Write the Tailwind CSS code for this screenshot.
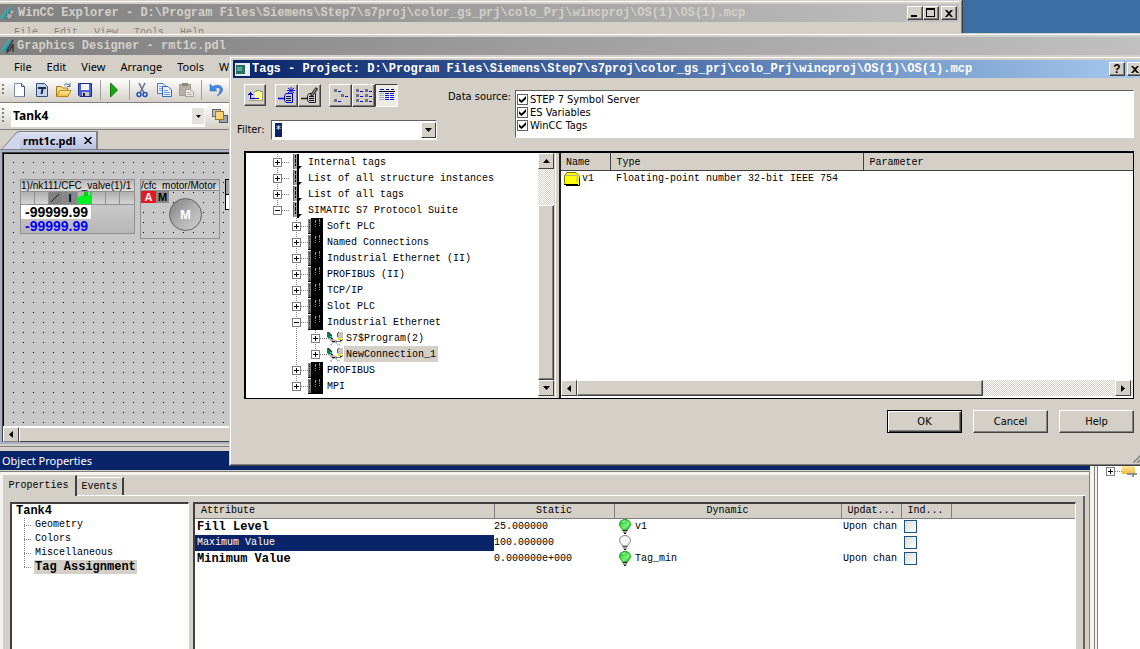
<!DOCTYPE html>
<html lang="en">
<head>
<meta charset="utf-8">
<title>Graphics Designer</title>
<script src="https://cdn.jsdelivr.net/npm/@tailwindcss/browser@4"></script>
</head>
<body class="relative h-screen overflow-hidden bg-[#3a6ea5] font-['Liberation_Mono',monospace] text-[10px] leading-4 text-black">

<svg class="absolute size-0" aria-hidden="true">
  <defs>
    <linearGradient id="gBulb" x1="0" y1="0" x2="1" y2="1"><stop offset="0" stop-color="#00c010"/><stop offset=".6" stop-color="#7cf07c"/><stop offset="1" stop-color="#00b010"/></linearGradient>
    <linearGradient id="gFold" x1="0" y1="0" x2="0" y2="1"><stop offset="0" stop-color="#fff0a8"/><stop offset="1" stop-color="#efb73a"/></linearGradient>
    <linearGradient id="gTeal" x1="0" y1="0" x2="1" y2="1"><stop offset="0" stop-color="#d8ffff"/><stop offset=".5" stop-color="#35b0b8"/><stop offset="1" stop-color="#0a5a68"/></linearGradient>
  </defs>
  <symbol id="plus" viewBox="0 0 16 16">
    <path d="M4.500 0V16" stroke="#808080" stroke-dasharray="1 1"/><path d="M9 8.500H16" stroke="#808080" stroke-dasharray="1 1"/>
    <rect x=".5" y="4.500" width="8" height="8" fill="#fff" stroke="#808080"/><path d="M2 8.500H7M4.500 6V11" stroke="#000"/>
  </symbol>
  <symbol id="plus-end" viewBox="0 0 16 16">
    <path d="M4.500 0V5" stroke="#808080" stroke-dasharray="1 1"/><path d="M9 8.500H16" stroke="#808080" stroke-dasharray="1 1"/>
    <rect x=".5" y="4.500" width="8" height="8" fill="#fff" stroke="#808080"/><path d="M2 8.500H7M4.500 6V11" stroke="#000"/>
  </symbol>
  <symbol id="minus" viewBox="0 0 16 16">
    <path d="M4.500 0V16" stroke="#808080" stroke-dasharray="1 1"/><path d="M9 8.500H16" stroke="#808080" stroke-dasharray="1 1"/>
    <rect x=".5" y="4.500" width="8" height="8" fill="#fff" stroke="#808080"/><path d="M2 8.500H7" stroke="#000"/>
  </symbol>
  <symbol id="minus-end" viewBox="0 0 16 16">
    <path d="M4.500 0V5" stroke="#808080" stroke-dasharray="1 1"/><path d="M9 8.500H16" stroke="#808080" stroke-dasharray="1 1"/>
    <rect x=".5" y="4.500" width="8" height="8" fill="#fff" stroke="#808080"/><path d="M2 8.500H7" stroke="#000"/>
  </symbol>
  <symbol id="guide" viewBox="0 0 19 16"><path d="M4.500 0V16" stroke="#808080" stroke-dasharray="1 1"/></symbol>
  <symbol id="taglist" viewBox="0 0 16 16">
    <rect x="4" y="0" width="4" height="15" fill="#a0a0a0"/><path d="M4.500 0V15" stroke="#606060"/><path d="M6.500 1V4M6.500 5V9M6.500 10V12" stroke="#000"/><rect x="8" y="0" width="2" height="16" fill="#000"/><path d="M8 12H13L10 15Z" fill="#000"/>
  </symbol>
  <symbol id="channel" viewBox="0 0 16 16">
    <rect x="0" y="1" width="3" height="14" fill="#808080"/><path d="M1.500 2V5M1.500 6V7M1.500 8V11M1.500 12V15" stroke="#f00"/><rect x="3" y="0" width="12" height="16" fill="#000"/><path d="M7.500 2V9M11.500 1V8" stroke="#909090" stroke-dasharray="3 1 1 1"/><path d="M0 15.500H4" stroke="#000"/>
  </symbol>
  <symbol id="conn" viewBox="0 0 17 16">
    <path d="M0 2H2L5 5V9H2L0 7Z" fill="#0a8a30"/><path d="M1 2L5 6" stroke="#124"/><path d="M2 8L5 8L8 10H10V13H6L3 11Z" fill="#b0b0b0"/><path d="M16 2H12L10 4V7L12 9L16 8Z" fill="#c4c4c4"/><path d="M10.500 4V7M12 2L10 4" stroke="#555"/><path d="M11 8H14V10H11Z" fill="#e8e000"/><path d="M9 11.500H14L16 9" fill="none" stroke="#777"/><path d="M4 8.500H6M5 11.500H8M13 10.500H15" stroke="#222"/><path d="M3 15L6 13M9 13L12 15M4 15H6M10 15H13" stroke="#999" stroke-dasharray="1 1"/><path d="M3 6.500H5" stroke="#0cc"/>
  </symbol>
  <symbol id="bulb-on" viewBox="0 0 12 15">
    <path d="M6 .5C9 .5 11.500 2.500 11.500 5.500C11.500 8 9 9 8.500 11H3.500C3 9 .5 8 .5 5.500C.5 2.500 3 .5 6 .5Z" fill="url(#gBulb)" stroke="#12a018"/><path d="M3 3Q4 2 6 2" stroke="#d8ffd8" fill="none"/><path d="M3.500 11.500H8.500M4 13H8" stroke="#333"/><path d="M5 14.500H7" stroke="#111"/>
  </symbol>
  <symbol id="bulb-off" viewBox="0 0 12 15">
    <path d="M6 .5C9 .5 11.500 2.500 11.500 5.500C11.500 8 9 9 8.500 11H3.500C3 9 .5 8 .5 5.500C.5 2.500 3 .5 6 .5Z" fill="#f4f4f4" stroke="#888"/><path d="M3.500 11.500H8.500M4 13H8" stroke="#555"/><path d="M5 14.500H7" stroke="#111"/>
  </symbol>
  <symbol id="x" viewBox="0 0 8 7"><path d="M0 0H2L4 2L6 0H8L5 3.500L8 7H6L4 5L2 7H0L3 3.500Z" fill="#000"/></symbol>
</svg>

<!-- WinCC Explorer -->
<section aria-label="WinCC Explorer" class="absolute top-0 left-0 h-[34px] w-[963px] overflow-hidden border-r border-[#404040] bg-[#d4d0c8]">
  <div class="h-full border-r border-[#808080] pr-[2px]">
    <div class="mt-px border-t border-white"></div>
    <header class="mt-[2px] flex h-[18px] items-center bg-linear-to-r from-[#808080] to-[#c0c0c0] pr-[2px]">
      <svg class="size-4 shrink-0" viewBox="0 0 16 16"><path d="M11 0L1 12L0 14L9 13Z" fill="url(#gTeal)"/><circle cx="9.500" cy="11" r="3" fill="#aaa" stroke="#555" stroke-dasharray="2 1"/><circle cx="12" cy="7" r="2" fill="#bbb" stroke="#555" stroke-dasharray="1 1"/></svg>
      <h1 class="ml-[2px] flex-1 text-[12px] font-bold whitespace-nowrap text-[#d4d0c8]">WinCC Explorer - D:\Program Files\Siemens\Step7\s7proj\color_gs_prj\colo_Prj\wincproj\OS(1)\OS(1).mcp</h1>
      <button aria-label="Minimize" class="h-[14px] w-4 border border-white border-r-[#404040] border-b-[#404040] bg-[#d4d0c8] shadow-[inset_-1px_-1px_0_#808080]"><svg class="ml-[3px] h-3 w-2" viewBox="0 0 8 12"><rect y="8" width="6" height="2"/></svg></button>
      <button aria-label="Maximize" class="h-[14px] w-4 border border-white border-r-[#404040] border-b-[#404040] bg-[#d4d0c8] shadow-[inset_-1px_-1px_0_#808080]"><svg class="ml-[2px] h-3 w-[9px]" viewBox="0 0 9 12" shape-rendering="crispEdges"><path d="M.5 2V9.500H8.500V2" fill="none" stroke="#000"/><rect y="1" width="9" height="2"/></svg></button>
      <button aria-label="Close" class="ml-[2px] flex h-[14px] w-4 items-center justify-center border border-white border-r-[#404040] border-b-[#404040] bg-[#d4d0c8] shadow-[inset_-1px_-1px_0_#808080]"><svg class="h-[7px] w-2"><use href="#x"/></svg></button>
    </header>
    <nav class="flex gap-4 pt-[3px] pl-[14px] text-[#808080]"><a href="#">File</a><a href="#">Edit</a><a href="#">View</a><a href="#">Tools</a><a href="#">Help</a></nav>
  </div>
</section>

<!-- Graphics Designer -->
<main class="absolute inset-x-0 top-[33px] bottom-0 flex flex-col bg-[#d4d0c8]">
  <div class="mt-px border-t border-white"></div>
  <header class="mt-[2px] flex h-[18px] shrink-0 items-center bg-linear-to-r from-[#808080] to-[#c0c0c0]">
    <svg class="size-4 shrink-0" viewBox="0 0 16 16"><path d="M9 1L0 14L7 12L10 3Z" fill="url(#gTeal)"/><path d="M13 2L8 11L7 14L10 12L13 6V14" fill="none" stroke="#333" stroke-width="1.500"/></svg>
    <h2 class="ml-px text-[12px] font-bold text-[#d4d0c8]">Graphics Designer - rmt1c.pdl</h2>
  </header>
  <nav class="flex h-[23px] w-[230px] shrink-0 items-center gap-[15px] overflow-hidden pl-[14px] font-['Noto_Sans',sans-serif] text-[11px]">
    <a href="#">File</a><a href="#">Edit</a><a href="#">View</a><a href="#">Arrange</a><a href="#">Tools</a><a href="#">Window</a>
  </nav>
  <div class="flex h-[25px] shrink-0 items-center border-b border-[#808080] bg-linear-to-b from-white to-[#d4d0c8] pl-[2px]">
    <svg class="mr-2 h-3 w-[2px]" viewBox="0 0 2 12"><path d="M1 0V12" stroke="#808080" stroke-width="2" stroke-dasharray="2 2"/></svg>
    <button aria-label="New"><svg class="size-4" viewBox="0 0 16 16"><path d="M2.500 1.500H9.500L12.500 4.500V14.500H2.500Z" fill="#fbfdff" stroke="#7890b0"/><path d="M9.500 1.500V4.500H12.500V14.500" fill="none" stroke="#405878"/></svg></button>
    <button aria-label="New template" class="ml-[6px]"><svg class="size-4" viewBox="0 0 16 16"><path d="M2.500 1.500H10.500L13.500 4.500V14.500H2.500Z" fill="#c2d2ec" stroke="#33507c"/><path d="M4 5H12V7H9.500L8.500 12H6.500L7.500 7H4Z" fill="#1a2840"/></svg></button>
    <button aria-label="Open" class="ml-[5px]"><svg class="h-4 w-[18px]" viewBox="0 0 18 16"><path d="M1.500 14V4.500H6L7.500 6H12.500V8" fill="#f9dc82" stroke="#a87818"/><path d="M1.500 14.500L4.500 8.500H16L13 14.500Z" fill="url(#gFold)" stroke="#b8841c"/><path d="M9 3.500Q12 0 15 4M15 1V4.500H12" fill="none" stroke="#506888"/></svg></button>
    <button aria-label="Save" class="ml-1"><svg class="size-4" viewBox="0 0 16 16"><path d="M1.500 1.500H14.500V14.500H3L1.500 13Z" fill="#4a62d8" stroke="#1c2c90"/><rect x="4" y="2" width="8" height="6" fill="#f4f6ff"/><rect x="5" y="10" width="7" height="4" fill="#c8c8d0"/><rect x="6" y="11" width="2" height="3" fill="#222"/></svg></button>
    <span class="mr-[6px] ml-[7px] h-5 border-l border-[#a0a0a0]"></span>
    <button aria-label="Run"><svg class="size-4" viewBox="0 0 16 16"><path d="M3.500 1V15L10.500 8Z" fill="#18a818" stroke="#0a7a0a"/></svg></button>
    <span class="mr-1 ml-[6px] h-5 border-l border-[#a0a0a0]"></span>
    <button aria-label="Cut"><svg class="size-4" viewBox="0 0 16 16"><path d="M5 1L10 11M11 1L6 11" stroke="#607088" stroke-width="1.500"/><circle cx="5" cy="12.500" r="2" fill="none" stroke="#2050b8" stroke-width="1.500"/><circle cx="11" cy="12.500" r="2" fill="none" stroke="#2050b8" stroke-width="1.500"/></svg></button>
    <button aria-label="Copy" class="ml-[6px]"><svg class="size-4" viewBox="0 0 16 16"><path d="M1.500 1.500H7L9.500 4V11.500H1.500Z" fill="#eaf3ff" stroke="#4878c0"/><path d="M3 4.500H7M3 6.500H7M3 8.500H6" stroke="#78a4e0"/><path d="M6.500 4.500H12L15.500 8V14.500H6.500Z" fill="#eaf3ff" stroke="#3868b8"/><path d="M8 8.500H12M8 10.500H14M8 12.500H14" stroke="#6898dc"/></svg></button>
    <button aria-label="Paste" class="ml-[6px]"><svg class="size-4" viewBox="0 0 16 16"><path d="M1.500 2.500H12.500V13.500H1.500Z" fill="#b8b0a4" stroke="#a09a90"/><rect x="4" y="1" width="6" height="3" fill="#8c867c"/><path d="M7.500 7.500H12L15.500 10V14.500H7.500Z" fill="#ece8e4" stroke="#a8a29a"/><path d="M9 10.500H13M9 12.500H14" stroke="#b8b2aa"/></svg></button>
    <span class="mx-[7px] h-5 border-l border-[#a0a0a0]"></span>
    <button aria-label="Undo"><svg class="size-4" viewBox="0 0 16 16"><path d="M1 2V9H8L6 7Q11 4 11 8Q11 11 8 14Q14 11 13.500 7Q12 1 3.500 4.500Z" fill="#4088e8" stroke="#2a60b8" stroke-width=".5"/></svg></button>
  </div>
  <div class="flex h-[27px] shrink-0 items-center border-b border-[#808080] bg-linear-to-b from-white to-[#d4d0c8] pl-[2px]">
    <svg class="mr-[7px] h-4 w-[2px]" viewBox="0 0 2 16"><path d="M1 0V16" stroke="#808080" stroke-width="2" stroke-dasharray="2 2"/></svg>
    <div class="flex h-[21px] w-[194px] items-center bg-white pr-px">
      <select aria-label="Object" class="min-w-0 flex-1 appearance-none bg-white pl-[2px] font-['Noto_Sans',sans-serif] text-[12px] font-bold"><option>Tank4</option></select>
      <span class="flex h-4 w-3 items-center justify-center bg-[#e4e1dc]"><svg class="h-[3px] w-[5px]" viewBox="0 0 5 3"><path d="M0 0H5L2.500 3Z"/></svg></span>
    </div>
    <button aria-label="Arrange" class="ml-[7px]"><svg class="size-4" viewBox="0 0 16 16"><rect x=".5" y="1.500" width="8" height="7" fill="#b8c0c8" stroke="#606870"/><rect x="7.500" y="7.500" width="8" height="7" fill="#98a4b0" stroke="#505860"/><rect x="3.500" y="3.500" width="8" height="8" fill="#fcd478" stroke="#a87818"/></svg></button>
  </div>

  <!-- Drawing tabs and canvas -->
  <div class="flex h-5 shrink-0 items-end border-b border-[#808080]">
    <div class="ml-[2px] flex h-5">
      <svg class="h-5 w-[18px]" viewBox="0 0 18 20"><path d="M0 20L14 4Q16 2 18 2V20Z" fill="#cfd6ee"/><path d="M0 20L14 4Q16 2.500 18 2.500" fill="none" stroke="#808080"/></svg>
      <button class="mt-[2px] flex items-center gap-2 border-t border-r-2 border-[#808080] bg-linear-to-b from-[#dde2f4] to-[#b8c2e0] pr-1 pl-[3px] font-['Noto_Sans',sans-serif] text-[11px] font-bold">rmt1c.pdl <svg class="h-[7px] w-2" viewBox="0 0 8 7"><path d="M.5 0L7.500 7M7.500 0L.5 7" stroke="#000" stroke-width="1.500"/></svg></button>
    </div>
  </div>
  <div class="shrink-0 border-y-2 border-l-2 border-[#a8b0c8]">
    <div class="border-t border-l border-[#404040]">
      <div class="relative h-[273px] overflow-hidden border-t border-l border-black bg-[#c8c8c8] bg-[radial-gradient(circle_at_0.5px_0.5px,#000_0.6px,transparent_0.7px)] bg-[length:10px_10px] bg-[position:9px_8px] font-['Liberation_Sans',sans-serif]">
        <div class="absolute top-[25px] left-4 w-[115px] border border-[#909090] bg-linear-to-b from-[#d8d8d8] to-[#b8b8b8]">
          <div class="h-[11px] overflow-hidden bg-linear-to-b from-[#b8b8b8] to-[#dcdcdc] text-[10px] leading-[11px] whitespace-nowrap">1)/nk111/CFC_valve(1)/1</div>
          <div class="grid h-[14px] grid-cols-8 divide-x divide-[#909090] border-y border-[#909090] bg-linear-to-b from-[#b0b0b0] to-[#d4d4d4]">
            <span></span><span></span>
            <span class="bg-[#808080]"><svg class="size-3" viewBox="0 0 12 12"><path d="M2 10L10 2" stroke="#222"/></svg></span>
            <span class="bg-[#888] text-center text-[11px] leading-3 font-bold">I</span>
            <span class="bg-[#00f020]"><svg class="size-3" viewBox="0 0 12 12"><path d="M0 0H6V2L4 4L0 5ZM10 0H12V3H10Z" fill="#b8b8b8"/><circle cx="8" cy="2" r="2" fill="#00c818"/></svg></span>
            <span></span><span></span><span></span>
          </div>
          <div class="w-[70px] bg-white pl-1 text-[14px] leading-[14px] font-bold">-99999.99</div>
          <div class="pl-1 text-[14px] leading-[14px] font-bold text-[#0000ff]">-99999.99</div>
        </div>
        <div class="absolute top-[25px] left-[136px] h-[60px] w-20 border border-[#909090]">
          <div class="h-[11px] overflow-hidden border-b border-[#909090] bg-linear-to-b from-[#b8b8b8] to-[#dcdcdc] text-[10px] leading-[11px] whitespace-nowrap">/cfc_motor/Motor</div>
          <div class="flex h-3 text-center text-[11px] leading-3 font-bold"><span class="w-[15px] bg-[#e81820] text-white">A</span><span class="w-[13px] bg-[#888]">M</span></div>
          <div class="absolute top-[18px] left-7 flex size-[33px] items-center justify-center rounded-full border border-[#606060] bg-linear-to-br from-[#808080] via-[#b0b0b0] to-[#d0d0d0] text-[13px] font-bold text-white">M</div>
        </div>
        <div class="absolute top-[25px] left-[221px] h-[31px] w-20 border border-black bg-white"><div class="h-[15px] border-b border-black bg-[#a0a0a0]"></div></div>
      </div>
      <div class="flex h-4 border-t border-white bg-[#d4d0c8]">
        <button aria-label="Scroll left" class="flex w-4 items-center justify-center border border-white border-r-[#404040] border-b-[#808080]"><svg class="h-[7px] w-1" viewBox="0 0 4 7"><path d="M4 0V7L0 3.500Z"/></svg></button>
        <div class="flex-1 border border-white border-b-[#404040]"></div>
      </div>
    </div>
  </div>

  <!-- Object properties and library -->
  <div class="mt-[2px] flex min-h-0 flex-1 border-t border-[#808080]">
    <section aria-label="Object Properties" class="flex min-w-0 flex-1 flex-col">
      <h2 class="mt-1 h-[19px] shrink-0 bg-[#0a246a] pl-[2px] font-['Noto_Sans',sans-serif] text-[11px] leading-[19px] text-white">Object Properties</h2>
      <div class="mt-px flex min-h-0 flex-1 flex-col border-t border-r border-[#808080] bg-[#f4f3f0] pt-[3px] pl-[3px]">
        <div class="flex min-h-0 flex-1 flex-col bg-[#d4d0c8] pr-1">
          <div class="flex shrink-0 items-end" role="tablist">
            <button role="tab" class="h-[21px] w-[74px] border-t border-r-2 border-[#d4d0c8] border-r-[#404040] pr-px text-[10px]">Properties</button>
            <div class="flex flex-1 items-end border-b border-white">
              <button role="tab" class="h-[18px] w-[47px] border-t border-r-2 border-t-white border-r-[#404040] text-[10px]">Events</button>
            </div>
          </div>
          <div class="flex min-h-0 flex-1 gap-1 border-r-2 border-[#606060] pt-[6px] pr-[7px] pl-[7px]">
            <div class="w-[179px] shrink-0 border-t-2 border-r border-l-2 border-[#404040] border-r-white bg-white">
              <div class="pl-1 text-[12px] leading-[14px] font-bold">Tank4</div>
              <ul class="leading-[14px]">
                <li class="flex"><svg class="mr-[3px] ml-3 h-[14px] w-2" viewBox="0 0 8 14" shape-rendering="crispEdges"><path d="M.5 0V14M0 7.500H8" stroke="#808080" stroke-dasharray="1 1"/></svg><a href="#">Geometry</a></li>
                <li class="flex"><svg class="mr-[3px] ml-3 h-[14px] w-2" viewBox="0 0 8 14" shape-rendering="crispEdges"><path d="M.5 0V14M0 7.500H8" stroke="#808080" stroke-dasharray="1 1"/></svg><a href="#">Colors</a></li>
                <li class="flex"><svg class="mr-[3px] ml-3 h-[14px] w-2" viewBox="0 0 8 14" shape-rendering="crispEdges"><path d="M.5 0V14M0 7.500H8" stroke="#808080" stroke-dasharray="1 1"/></svg><a href="#">Miscellaneous</a></li>
                <li class="flex"><svg class="mr-[2px] ml-3 h-[14px] w-2" viewBox="0 0 8 14" shape-rendering="crispEdges"><path d="M.5 0V8M0 7.500H8" stroke="#808080" stroke-dasharray="1 1"/></svg><a href="#" class="bg-[#d4d0c8] px-px text-[12px] font-bold">Tag Assignment</a></li>
              </ul>
            </div>
            <div class="min-w-0 flex-1 border-t-2 border-r border-l-2 border-[#404040] border-r-white bg-white">
              <table class="w-full table-fixed border-collapse text-left">
                <colgroup><col class="w-[299px]"><col class="w-[120px]"><col class="w-[227px]"><col class="w-[60px]"><col class="w-[50px]"><col></colgroup>
                <thead class="bg-[#d4d0c8]">
                  <tr class="h-[14px] border-b border-[#808080] leading-3">
                    <th class="border-r border-[#808080] p-0 pt-px pl-[6px] font-normal">Attribute</th>
                    <th class="border-r border-[#808080] p-0 pt-px text-center font-normal">Static</th>
                    <th class="border-r border-[#808080] p-0 pt-px text-center font-normal">Dynamic</th>
                    <th class="border-r border-[#808080] p-0 pt-px pl-[6px] font-normal">Updat...</th>
                    <th class="border-r border-[#808080] p-0 pt-px pl-[6px] font-normal">Ind...</th>
                    <th class="p-0"></th>
                  </tr>
                </thead>
                <tbody>
                  <tr class="h-4">
                    <td class="p-0 pl-[2px] text-[12px] font-bold">Fill Level</td><td class="p-0">25.000000</td>
                    <td class="p-0"><span class="flex items-center gap-1 pl-[5px]"><svg class="h-[15px] w-3"><use href="#bulb-on"/></svg>v1</span></td>
                    <td class="p-0 pl-[2px] whitespace-nowrap">Upon chan</td>
                    <td class="p-0"><input type="checkbox" aria-label="Fill Level indirect" class="ml-[3px] block size-[13px] appearance-none border border-[#1c5180] bg-linear-to-br from-[#dcdcd7] to-white"></td><td></td>
                  </tr>
                  <tr class="h-4">
                    <td class="bg-[#0a246a] p-0 pl-[2px] text-white">Maximum Value</td><td class="p-0">100.000000</td>
                    <td class="p-0"><span class="flex items-center gap-1 pl-[5px]"><svg class="h-[15px] w-3"><use href="#bulb-off"/></svg></span></td>
                    <td></td>
                    <td class="p-0"><input type="checkbox" aria-label="Maximum Value indirect" class="ml-[3px] block size-[13px] appearance-none border border-[#1c5180] bg-linear-to-br from-[#dcdcd7] to-white"></td><td></td>
                  </tr>
                  <tr class="h-4">
                    <td class="p-0 pl-[2px] text-[12px] font-bold">Minimum Value</td><td class="p-0">0.000000e+000</td>
                    <td class="p-0"><span class="flex items-center gap-1 pl-[5px]"><svg class="h-[15px] w-3"><use href="#bulb-on"/></svg>Tag_min</span></td>
                    <td class="p-0 pl-[2px] whitespace-nowrap">Upon chan</td>
                    <td class="p-0"><input type="checkbox" aria-label="Minimum Value indirect" class="ml-[3px] block size-[13px] appearance-none border border-[#1c5180] bg-linear-to-br from-[#dcdcd7] to-white"></td><td></td>
                  </tr>
                </tbody>
              </table>
            </div>
          </div>
        </div>
      </div>
    </section>
    <aside aria-label="Library" class="flex w-[50px] shrink-0 bg-[#f4f3f0] pl-1">
      <div class="w-1 border-x border-[#808080]"></div>
      <div class="flex-1 bg-white pt-4 pl-2">
        <div class="flex"><svg class="size-4 shrink-0" shape-rendering="crispEdges"><use href="#plus-end"/></svg><svg class="size-4 shrink-0" viewBox="0 0 16 16"><path d="M0 2H11L13 4V11H0Z" fill="url(#gFold)"/><path d="M5 11H15M11 11V14" stroke="#909090" stroke-width="2"/></svg></div>
      </div>
    </aside>
  </div>
</main>

<!-- Tags dialog -->
<section role="dialog" aria-label="Tags" class="absolute top-[56px] -right-[9px] left-[229px] border border-[#d4d0c8] border-b-[#404040] bg-[#d4d0c8]">
  <div class="border border-white border-b-[#808080]">
    <header class="mx-[2px] mt-[2px] flex h-[18px] items-center bg-linear-to-r from-[#0a246a] to-[#a6caf0] pr-[2px] pl-[2px]">
      <svg class="h-[13px] w-[15px]" viewBox="0 0 15 13"><rect width="15" height="13" fill="#e8e8e8"/><rect x="1" y="2" width="9" height="9" fill="#2a7060"/><rect x="2" y="4" width="5" height="4" fill="#58a8a0"/><rect x="11" y="2" width="3" height="2" fill="#fff"/><rect x="11" y="5" width="3" height="2" fill="#fff"/></svg>
      <h2 class="ml-[2px] flex-1 text-[12px] font-bold whitespace-nowrap text-white">Tags - Project: D:\Program Files\Siemens\Step7\s7proj\color_gs_prj\colo_Prj\wincproj\OS(1)\OS(1).mcp</h2>
      <button aria-label="Help" class="h-[14px] w-4 border border-white border-r-[#404040] border-b-[#404040] bg-[#d4d0c8] font-['Liberation_Sans',sans-serif] text-[12px] leading-3 font-bold shadow-[inset_-1px_-1px_0_#808080]">?</button>
      <button aria-label="Close" class="ml-[2px] flex h-[14px] w-4 items-center justify-center border border-white border-r-[#404040] border-b-[#404040] bg-[#d4d0c8] shadow-[inset_-1px_-1px_0_#808080]"><svg class="h-[7px] w-2"><use href="#x"/></svg></button>
    </header>
    <div class="pr-[13px] pb-[31px] pl-[13px] font-['DejaVu_Sans_Condensed','DejaVu_Sans',sans-serif] text-[11px]">
      <div class="flex pt-[6px]">
        <div class="w-[193px] shrink-0">
          <div class="flex">
            <button aria-label="Up one level" class="flex size-[22px] items-center justify-center border border-white border-r-[#404040] border-b-[#404040] shadow-[inset_-1px_-1px_0_#808080]"><svg class="size-4" viewBox="0 0 16 16" shape-rendering="crispEdges"><path d="M7.500 13.500V3.500H9L10 2.500H13L14 4.500H15.500V13.500Z" fill="#ffff98"/><path d="M7 4.500H9L10 3.500H13L14 4.500H15.500V13.500H2" fill="none" stroke="#a0a080"/><path d="M3.500 11V5M1 7.500H6M2 6.500H5M3 11.500H12" stroke="#0000d0"/></svg></button>
            <button aria-label="New tag" class="ml-[9px] flex size-[23px] items-center justify-center border border-white border-r-[#404040] border-b-[#404040] shadow-[inset_-1px_-1px_0_#808080]"><svg class="size-[19px]" viewBox="0 0 19 19"><path d="M7.500 9.500L9 7.500H15.500V16.500H9L7.500 14.500Z" fill="#c8c8d8" stroke="#0000c8"/><path d="M1 12.500H7" stroke="#0000f0" stroke-width="1.500"/><path d="M9 10.500H14M9 12.500H14M9 14.500H14" stroke="#101030"/><path d="M14 1V8M10 4.500H18M11 2L17 7M17 2L11 7" stroke="#1010f0"/></svg></button>
            <button aria-label="Edit tag" class="flex size-[23px] items-center justify-center border border-white border-r-[#404040] border-b-[#404040] shadow-[inset_-1px_-1px_0_#808080]"><svg class="size-[19px]" viewBox="0 0 19 19"><path d="M7.500 9.500L9 7.500H15.500V16.500H9L7.500 14.500Z" fill="#c8c8c8" stroke="#222"/><path d="M1 12.500H7" stroke="#222" stroke-width="1.500"/><path d="M9 10.500H14M9 12.500H14M9 14.500H14" stroke="#000"/><path d="M17 2L11 10" stroke="#333" stroke-width="3"/><path d="M16 3L12 9" stroke="#aaa"/></svg></button>
            <button aria-label="Small icons" class="ml-2 flex size-[23px] items-center justify-center border border-white border-r-[#404040] border-b-[#404040] shadow-[inset_-1px_-1px_0_#808080]"><svg class="h-4 w-[18px]" viewBox="0 0 18 16" shape-rendering="crispEdges"><path d="M2 1H5V4H2ZM9 6H12V9H9ZM2 11H5V14H2Z" fill="#707080"/><path d="M6 3.500H9M13 8.500H16M6 13.500H9" stroke="#0000f0"/></svg></button>
            <button aria-label="List" class="flex size-[23px] items-center justify-center border border-white border-r-[#404040] border-b-[#404040] shadow-[inset_-1px_-1px_0_#808080]"><svg class="h-4 w-[18px]" viewBox="0 0 18 16" shape-rendering="crispEdges"><path d="M1 1H4V4H1ZM1 6H4V9H1ZM1 11H4V14H1ZM10 1H13V4H10ZM10 6H13V9H10ZM10 11H13V14H10Z" fill="#707080"/><path d="M5 3.500H8M5 8.500H8M5 13.500H8M14 3.500H17M14 8.500H17M14 13.500H17" stroke="#0000f0"/></svg></button>
            <button aria-label="Details" class="flex size-[23px] items-center justify-center border border-[#404040] border-r-white border-b-white bg-[#ecebe6]"><svg class="h-4 w-[18px]" viewBox="0 0 18 16" shape-rendering="crispEdges"><path d="M1 3.500H17" stroke="#000"/><path d="M2 1.500H6M8 1.500H11M13 1.500H16" stroke="#0000b0"/><path d="M1 5.500H6M1 7.500H6M1 9.500H6M1 11.500H6" stroke="#a0a8c0"/><path d="M7 5.500H11M7 7.500H11M7 9.500H11M7 11.500H11M12 5.500H16M12 7.500H16M12 9.500H16M12 11.500H16" stroke="#1010f0"/></svg></button>
          </div>
        </div>
        <span class="ml-[11px] pt-[5px] whitespace-nowrap">Data source:</span>
        <div class="mt-[6px] ml-[4px] h-12 min-w-0 flex-1 border border-[#606060] border-r-white border-b-white bg-white pt-[2px] pl-px leading-[13px]">
          <label class="flex gap-[2px]"><span class="mt-px flex size-[11px] items-center justify-center border border-[#606060]"><input type="checkbox" checked class="peer absolute size-[11px] appearance-none"><svg class="hidden size-[7px] peer-checked:block" viewBox="0 0 7 7"><path d="M0 2L2.500 4.500L7 0V3L2.500 7L0 5Z"/></svg></span>STEP 7 Symbol Server</label>
          <label class="flex gap-[2px]"><span class="mt-px flex size-[11px] items-center justify-center border border-[#606060]"><input type="checkbox" checked class="peer absolute size-[11px] appearance-none"><svg class="hidden size-[7px] peer-checked:block" viewBox="0 0 7 7"><path d="M0 2L2.500 4.500L7 0V3L2.500 7L0 5Z"/></svg></span>ES Variables</label>
          <label class="flex gap-[2px]"><span class="mt-px flex size-[11px] items-center justify-center border border-[#606060]"><input type="checkbox" checked class="peer absolute size-[11px] appearance-none"><svg class="hidden size-[7px] peer-checked:block" viewBox="0 0 7 7"><path d="M0 2L2.500 4.500L7 0V3L2.500 7L0 5Z"/></svg></span>WinCC Tags</label>
        </div>
      </div>
      <div class="-mt-[18px] -ml-[7px] flex w-[200px] items-center">
        <label for="filter" class="w-[34px]">Filter:</label>
        <div class="flex h-5 flex-1 items-center border border-[#606060] border-r-white border-b-white bg-white pl-[3px]">
          <input id="filter" value="*" class="h-[14px] w-[7px] bg-[#0a246a] text-center text-white">
          <button aria-label="Filter list" class="ml-auto flex h-4 w-[15px] items-center justify-center border border-white border-r-[#404040] border-b-[#404040] bg-[#d4d0c8]"><svg class="h-1 w-[7px]" viewBox="0 0 7 4"><path d="M0 0H7L3.500 4Z"/></svg></button>
        </div>
      </div>

      <div class="mt-[11px] flex h-[248px] border-2 border-r border-b border-black font-['Liberation_Mono',monospace] text-[10px]">
        <ul class="w-[292px] shrink-0 overflow-hidden bg-white pt-px leading-[18px] whitespace-nowrap">
          <li class="flex h-4 pl-[27px]"><svg class="size-4" shape-rendering="crispEdges"><use href="#plus"/></svg><svg class="mr-[3px] size-4"><use href="#taglist"/></svg>Internal tags</li>
          <li class="flex h-4 pl-[27px]"><svg class="size-4" shape-rendering="crispEdges"><use href="#plus"/></svg><svg class="mr-[3px] size-4"><use href="#taglist"/></svg>List of all structure instances</li>
          <li class="flex h-4 pl-[27px]"><svg class="size-4" shape-rendering="crispEdges"><use href="#plus"/></svg><svg class="mr-[3px] size-4"><use href="#taglist"/></svg>List of all tags</li>
          <li class="flex h-4 pl-[27px]"><svg class="size-4" shape-rendering="crispEdges"><use href="#minus-end"/></svg><svg class="mr-[3px] size-4"><use href="#taglist"/></svg>SIMATIC S7 Protocol Suite</li>
          <li class="flex h-4 pl-[46px]"><svg class="size-4" shape-rendering="crispEdges"><use href="#plus"/></svg><svg class="mr-[3px] size-4"><use href="#channel"/></svg>Soft PLC</li>
          <li class="flex h-4 pl-[46px]"><svg class="size-4" shape-rendering="crispEdges"><use href="#plus"/></svg><svg class="mr-[3px] size-4"><use href="#channel"/></svg>Named Connections</li>
          <li class="flex h-4 pl-[46px]"><svg class="size-4" shape-rendering="crispEdges"><use href="#plus"/></svg><svg class="mr-[3px] size-4"><use href="#channel"/></svg>Industrial Ethernet (II)</li>
          <li class="flex h-4 pl-[46px]"><svg class="size-4" shape-rendering="crispEdges"><use href="#plus"/></svg><svg class="mr-[3px] size-4"><use href="#channel"/></svg>PROFIBUS (II)</li>
          <li class="flex h-4 pl-[46px]"><svg class="size-4" shape-rendering="crispEdges"><use href="#plus"/></svg><svg class="mr-[3px] size-4"><use href="#channel"/></svg>TCP/IP</li>
          <li class="flex h-4 pl-[46px]"><svg class="size-4" shape-rendering="crispEdges"><use href="#plus"/></svg><svg class="mr-[3px] size-4"><use href="#channel"/></svg>Slot PLC</li>
          <li class="flex h-4 pl-[46px]"><svg class="size-4" shape-rendering="crispEdges"><use href="#minus"/></svg><svg class="mr-[3px] size-4"><use href="#channel"/></svg>Industrial Ethernet</li>
          <li class="flex h-4 pl-[46px]"><svg class="h-4 w-[19px]" shape-rendering="crispEdges"><use href="#guide"/></svg><svg class="size-4" shape-rendering="crispEdges"><use href="#plus"/></svg><svg class="mr-[2px] h-4 w-[17px]"><use href="#conn"/></svg>S7$Program(2)</li>
          <li class="flex h-4 pl-[46px]"><svg class="h-4 w-[19px]" shape-rendering="crispEdges"><use href="#guide"/></svg><svg class="size-4" shape-rendering="crispEdges"><use href="#plus-end"/></svg><svg class="h-4 w-[17px]"><use href="#conn"/></svg><span class="bg-[#d4d0c8] px-[2px]">NewConnection_1</span></li>
          <li class="flex h-4 pl-[46px]"><svg class="size-4" shape-rendering="crispEdges"><use href="#plus"/></svg><svg class="mr-[3px] size-4"><use href="#channel"/></svg>PROFIBUS</li>
          <li class="flex h-4 pl-[46px]"><svg class="size-4" shape-rendering="crispEdges"><use href="#plus-end"/></svg><svg class="mr-[3px] size-4"><use href="#channel"/></svg>MPI</li>
        </ul>
        <div class="flex w-4 shrink-0 flex-col bg-[repeating-conic-gradient(#fff_0_25%,#d4d0c8_0_50%)] bg-[length:2px_2px]">
          <button aria-label="Scroll up" class="flex h-4 items-center justify-center border border-white border-r-[#404040] border-b-[#404040] bg-[#d4d0c8]"><svg class="h-1 w-[7px]" viewBox="0 0 7 4"><path d="M0 4H7L3.500 0Z"/></svg></button>
          <div class="mt-[36px] flex-1 border border-white border-r-[#404040] border-b-[#404040] bg-[#d4d0c8] shadow-[inset_-1px_-1px_0_#808080]"></div>
          <button aria-label="Scroll down" class="mb-[2px] flex h-4 items-center justify-center border border-white border-r-[#404040] border-b-[#404040] bg-[#d4d0c8]"><svg class="h-1 w-[7px]" viewBox="0 0 7 4"><path d="M0 0H7L3.500 4Z"/></svg></button>
        </div>
        <div class="w-[5px] shrink-0 border-x border-[#d4d0c8] bg-white"><div class="ml-px h-full w-[2px] bg-[#d4d0c8]"></div></div>
        <div class="flex min-w-0 flex-1 flex-col border-l-2 border-[#202020] bg-white">
          <table class="w-full table-fixed border-collapse text-left">
            <colgroup><col class="w-[49px]"><col class="w-[253px]"><col></colgroup>
            <thead class="bg-[#d4d0c8]">
              <tr class="h-[17px] border-b border-[#404040] leading-[15px]">
                <th class="border-r border-[#404040] p-0 pt-[2px] pl-[5px] font-normal">Name</th>
                <th class="border-r border-[#404040] p-0 pt-[2px] pl-[6px] font-normal">Type</th>
                <th class="p-0 pt-[2px] pl-[6px] font-normal">Parameter</th>
              </tr>
            </thead>
            <tbody>
              <tr class="h-4">
                <td class="p-0"><span class="flex items-center gap-[2px] pl-[3px]"><svg class="h-[14px] w-4" viewBox="0 0 16 14"><path d="M1 3L3 .5H12L15.500 4V13.500H3L.5 11V4Z" fill="#ffff00" stroke="#807800"/><path d="M1 3.500H13V10" fill="none" stroke="#b0b090"/><path d="M0 12.500H14M2 13.500H15.500V6" fill="none" stroke="#000"/></svg>v1</span></td>
                <td class="p-0 pl-[6px] whitespace-nowrap">Floating-point number 32-bit IEEE 754</td>
                <td></td>
              </tr>
            </tbody>
          </table>
          <div class="mt-auto mb-[2px] flex h-4 bg-[repeating-conic-gradient(#fff_0_25%,#d4d0c8_0_50%)] bg-[length:2px_2px]">
            <button aria-label="Scroll left" class="flex w-4 items-center justify-center border border-white border-r-[#404040] border-b-[#404040] bg-[#d4d0c8]"><svg class="h-[7px] w-1" viewBox="0 0 4 7"><path d="M4 0V7L0 3.500Z"/></svg></button>
            <div class="w-[71%] border border-white border-r-[#404040] border-b-[#404040] bg-[#d4d0c8] shadow-[inset_-1px_-1px_0_#808080]"></div>
            <button aria-label="Scroll right" class="mr-[2px] ml-auto flex w-4 items-center justify-center border border-white border-r-[#404040] border-b-[#404040] bg-[#d4d0c8]"><svg class="h-[7px] w-1" viewBox="0 0 4 7"><path d="M0 0V7L4 3.500Z"/></svg></button>
          </div>
        </div>
      </div>

      <div class="mt-[11px] flex justify-end gap-[11px]">
        <button class="h-[23px] w-[75px] border border-black shadow-[inset_1px_1px_0_#fff,inset_-1px_-1px_0_#404040,inset_-2px_-2px_0_#808080]">OK</button>
        <button class="h-[23px] w-[75px] border border-white border-r-[#404040] border-b-[#404040] shadow-[inset_-1px_-1px_0_#808080]">Cancel</button>
        <button class="h-[23px] w-[75px] border border-white border-r-[#404040] border-b-[#404040] shadow-[inset_-1px_-1px_0_#808080]">Help</button>
      </div>
    </div>
  </div>
  <svg class="absolute right-[3px] bottom-[2px] size-3" viewBox="0 0 12 12"><path d="M0 12L12 0M4 12L12 4M8 12L12 8" stroke="#808080" stroke-width="1.500"/></svg>
</section>
</body>
</html>
